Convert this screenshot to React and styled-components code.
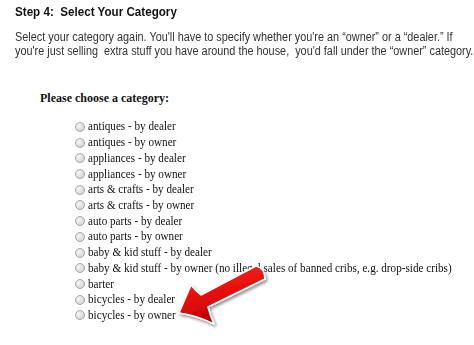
import React from 'react'
import styled, { createGlobalStyle } from 'styled-components'

const categories = [
    'antiques - by dealer',
    'antiques - by owner',
    'appliances - by dealer',
    'appliances - by owner',
    'arts & crafts - by dealer',
    'arts & crafts - by owner',
    'auto parts - by dealer',
    'auto parts - by owner',
    'baby & kid stuff - by dealer',
    'baby & kid stuff - by owner (no illegal sales of banned cribs, e.g. drop-side cribs)',
    'barter',
    'bicycles - by dealer',
    'bicycles - by owner',
]

function App() {
    return (
        <>
            <GlobalStyle />
            <Page>
                <StepTitle>Step 4:&nbsp; Select Your Category</StepTitle>
                <Intro>
                    Select your category again. You'll have to specify whether you're an “owner” or a “dealer.” If
                    <br />
                    you're just selling&nbsp; extra stuff you have around the house,&nbsp; you'd fall under the “owner” category.
                </Intro>
                <Form>
                    <FormLabel>Please choose a category:</FormLabel>
                    <List>
                        {categories.map((c) => (
                            <Item key={c}>
                                <Radio type="radio" name="cat" />
                                <ItemText>{c}</ItemText>
                            </Item>
                        ))}
                    </List>
                </Form>
                <Arrow width="474" height="345" viewBox="0 0 474 345">
                    <defs>
                        <linearGradient id="red" x1="0" y1="0" x2="0.3" y2="1">
                            <stop offset="0" stopColor="#ff2a1e" />
                            <stop offset="0.6" stopColor="#e30c0c" />
                            <stop offset="1" stopColor="#b80000" />
                        </linearGradient>
                        <filter id="shadow" x="-20%" y="-20%" width="140%" height="140%">
                            <feDropShadow dx="1.5" dy="2" stdDeviation="1.6" floodColor="#000" floodOpacity="0.45" />
                        </filter>
                    </defs>
                    <path
                        d="M179 313 Q185 299 191 285 Q196 291 201 295 L256 266 Q265 268 265 279 L208 307 Q210 315 214 324 Q196 315 179 313 Z"
                        fill="url(#red)"
                        stroke="#fff"
                        strokeWidth="1.6"
                        strokeLinejoin="round"
                        filter="url(#shadow)"
                    />
                </Arrow>
            </Page>
        </>
    )
}

export default App

const GlobalStyle = createGlobalStyle`
  html, body {
    margin: 0;
    padding: 0;
    background: #fff;
  }
  body {
    width: 474px;
    height: 345px;
    overflow: hidden;
  }
`

const Page = styled.div`
position: relative;
width: 474px;
height: 345px;
overflow: hidden;
padding: 4px 0 0 15px;
box-sizing: border-box;
`

const StepTitle = styled.h3`
margin: 0;
font-family: "Liberation Sans", Arial, sans-serif;
font-weight: bold;
font-size: 13px;
line-height: 16px;
color: #111;
white-space: nowrap;
transform: scaleX(0.895);
transform-origin: left center;
`

const Intro = styled.p`
margin: 10px 0 0 0;
font-family: "Liberation Sans", Arial, sans-serif;
font-size: 12px;
line-height: 14px;
color: #333;
white-space: nowrap;
transform: scaleX(0.905);
transform-origin: left center;
`

const Form = styled.div`
margin-top: 32px;
padding-left: 25px;
`

const FormLabel = styled.div`
font-family: "Liberation Serif", "Times New Roman", serif;
font-weight: bold;
font-size: 12px;
line-height: 16px;
color: #111;
`

const List = styled.ul`
list-style: none;
margin: 13px 0 0 0;
padding: 0 0 0 35px;
`

const Item = styled.li`
display: flex;
align-items: center;
height: 15.72px;
font-family: "Liberation Serif", "Times New Roman", serif;
font-size: 12px;
color: #111;
white-space: nowrap;
`

const ItemText = styled.span`
display: inline-block;
transform: scaleX(0.93);
transform-origin: left center;
`

const Radio = styled.input`
appearance: none;
-webkit-appearance: none;
width: 10px;
height: 10px;
margin: 0 3px 0 0;
border-radius: 50%;
border: 1px solid #a8a8a8;
background: radial-gradient(circle at 35% 35%, #f6f6f6 0%, #dcdcdc 60%, #c6c6c6 100%);
box-sizing: border-box;
flex-shrink: 0;
`

const Arrow = styled.svg`
position: absolute;
left: 0;
top: 0;
pointer-events: none;
`
